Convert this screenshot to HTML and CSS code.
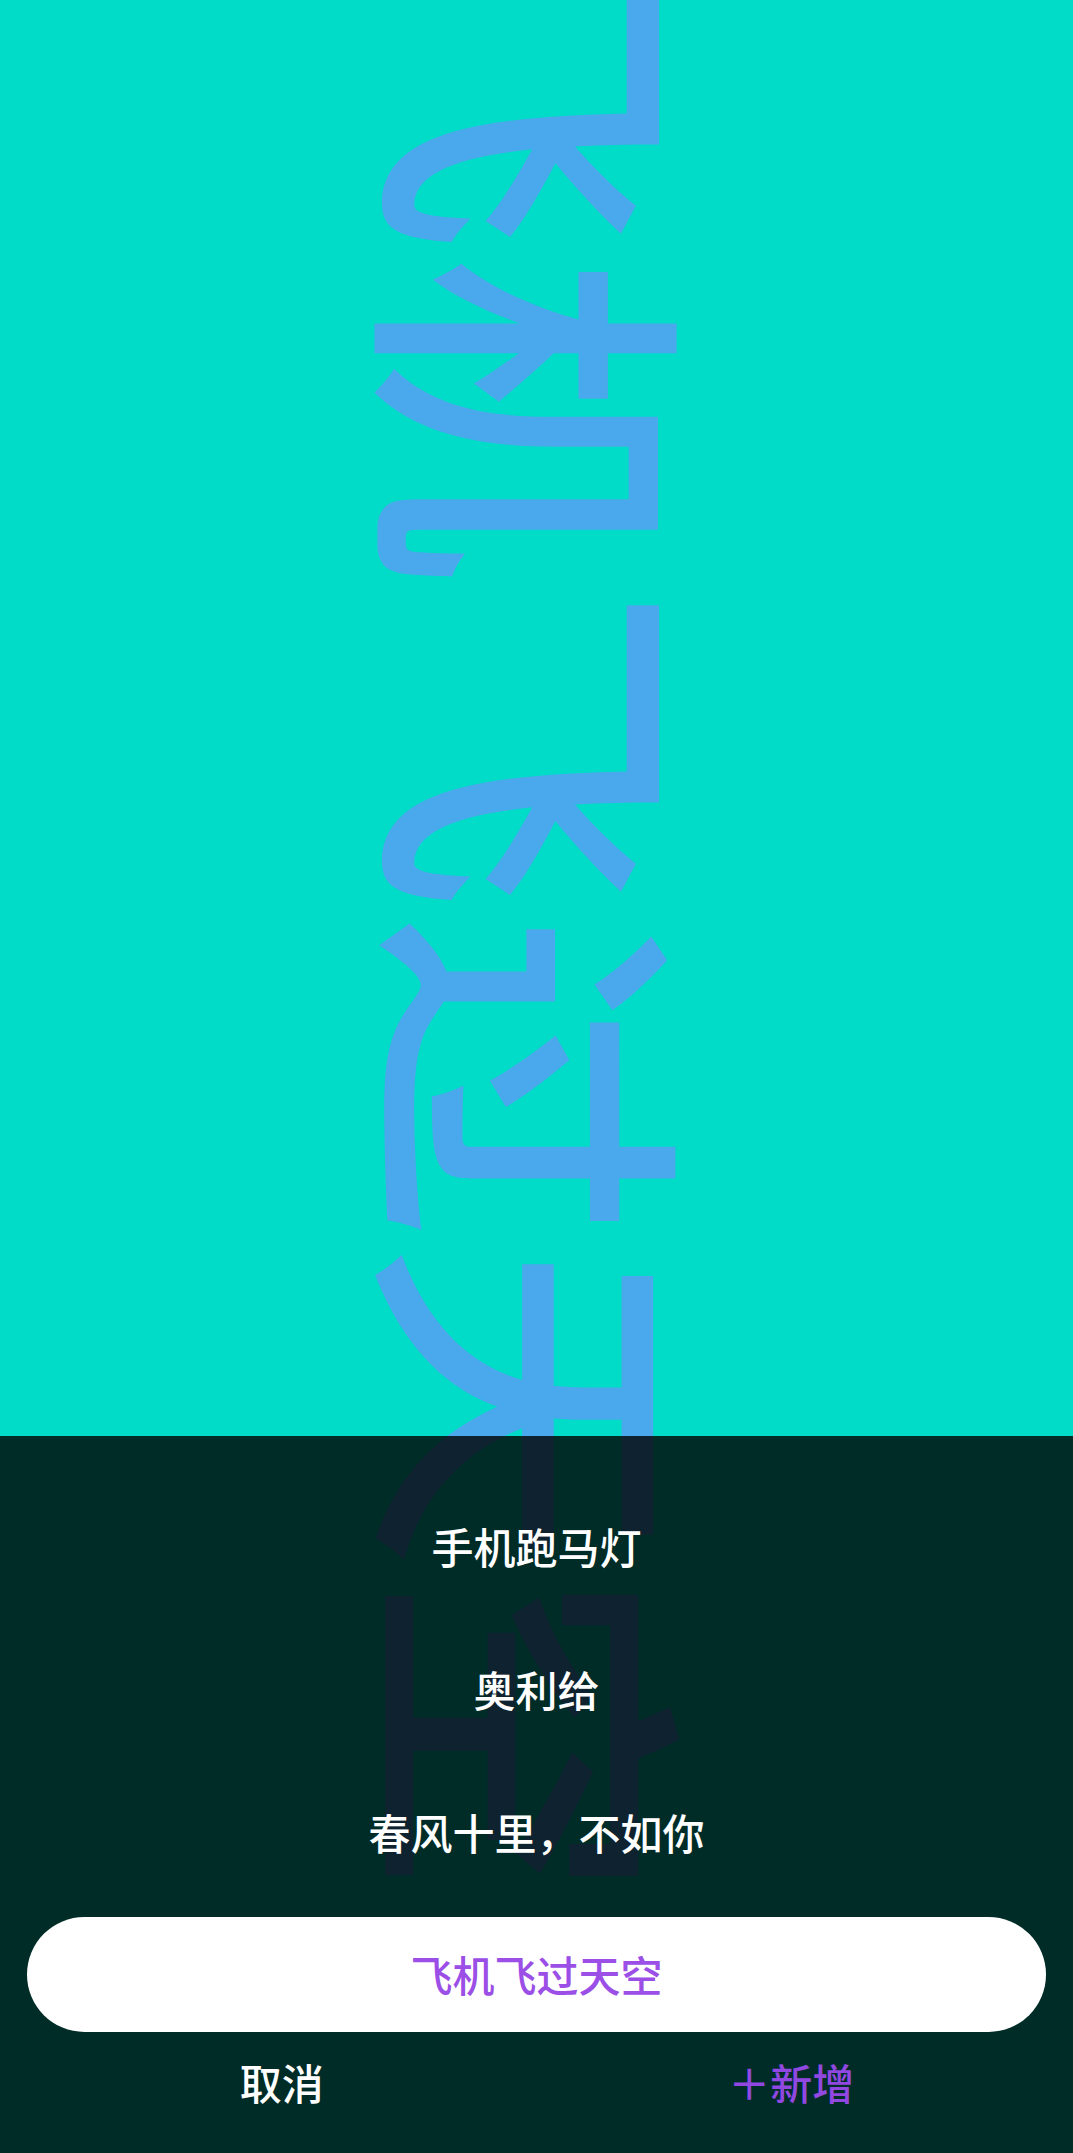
FILE: index.html
```html
<!DOCTYPE html>
<html lang="zh-CN">
<head>
<meta charset="utf-8">
<title>手机跑马灯</title>
<link rel="stylesheet" href="styles.css">
</head>
<body>
<div class="screen">
  <div class="marquee">
    <div class="marquee-text" style="transform: translateY(-73px);">飞机飞过天空</div>
  </div>
  <div class="sheet">
    <ul class="options">
      <li class="option">手机跑马灯</li>
      <li class="option">奥利给</li>
      <li class="option">春风十里，不如你</li>
    </ul>
    <div class="current">飞机飞过天空</div>
    <div class="actions">
      <div class="action cancel">取消</div>
      <div class="action add">＋新增</div>
    </div>
  </div>
</div>
</body>
</html>
```
FILE: styles.css
```css
html, body {
  margin: 0;
  padding: 0;
}
body {
  width: 1073px;
  height: 2153px;
  overflow: hidden;
  background: #00dcc8;
  font-family: "Noto Sans CJK SC", "Noto Sans", sans-serif;
}
.screen {
  position: relative;
  width: 1073px;
  height: 2153px;
  overflow: hidden;
}
.marquee {
  display: flex;
  justify-content: center;
  height: 100%;
  padding-left: 14px;
  box-sizing: border-box;
}
.marquee-text {
  writing-mode: vertical-rl;
  text-orientation: sideways;
  font-size: 326px;
  font-weight: 500;
  line-height: 1;
  letter-spacing: 3px;
  color: #4aa8ec;
  white-space: nowrap;
}
.sheet {
  position: absolute;
  left: 0;
  right: 0;
  top: 1436px;
  bottom: 0;
  box-sizing: border-box;
  padding: 38px 0 0;
  background: rgba(0, 0, 0, 0.8);
  display: flex;
  flex-direction: column;
}
.options {
  list-style: none;
  margin: 0;
  padding: 0;
  flex-shrink: 0;
}
.option {
  height: 143px;
  line-height: 143px;
  text-align: center;
  color: #ffffff;
  font-size: 42px;
  font-weight: 500;
}
.current {
  flex-shrink: 0;
  margin: 14px 27px 0;
  height: 115px;
  line-height: 113px;
  border-radius: 58px;
  background: #ffffff;
  color: #9b4fe6;
  font-size: 42px;
  font-weight: 500;
  text-align: center;
}
.actions {
  flex-shrink: 0;
  display: flex;
  padding: 0 27px;
  height: 102px;
}
.action {
  flex: 1;
  line-height: 100px;
  text-align: center;
  font-size: 42px;
  font-weight: 500;
}
.cancel {
  color: #ffffff;
}
.add {
  color: #9148e0;
}
```
